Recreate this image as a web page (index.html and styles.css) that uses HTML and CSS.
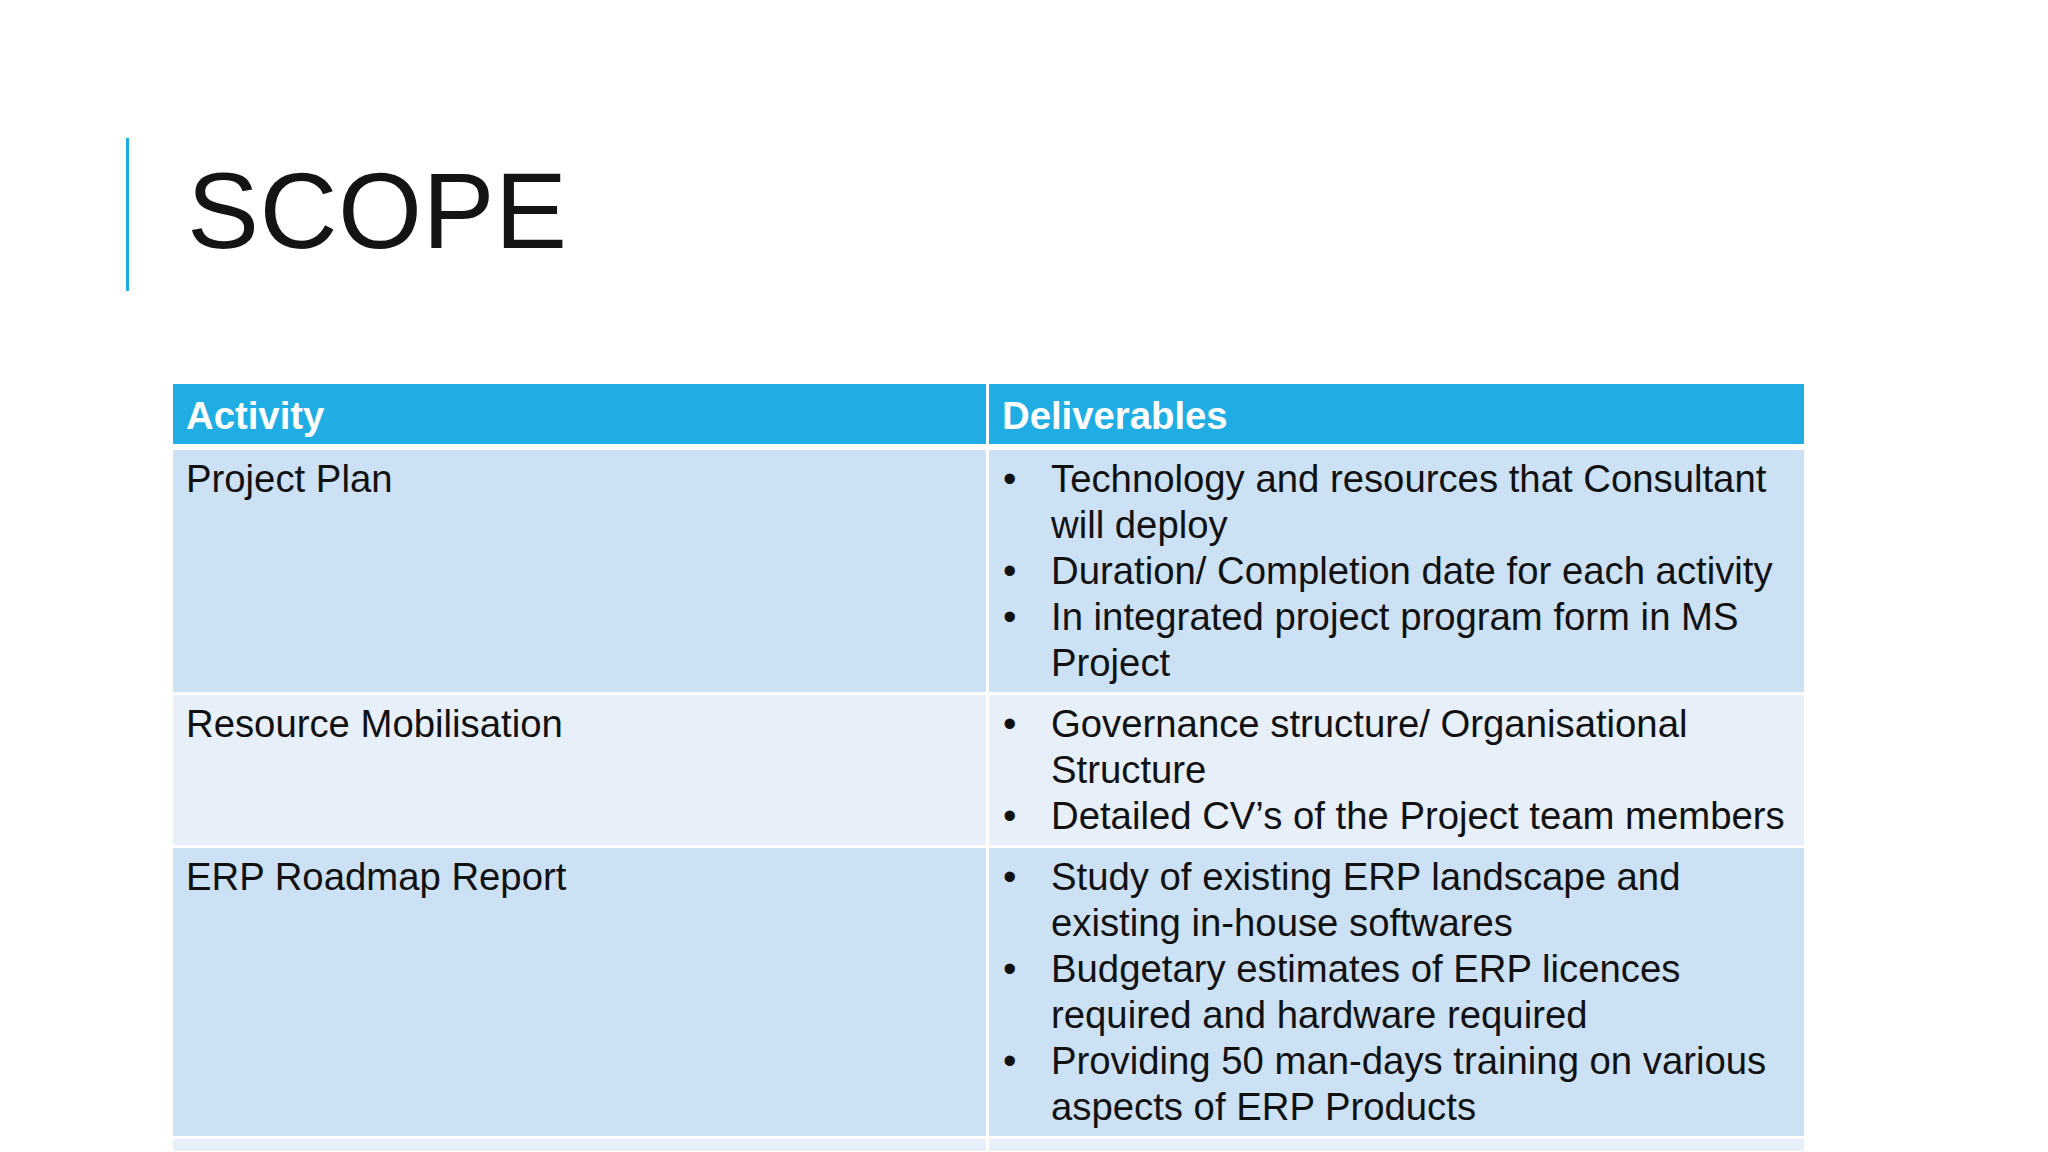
FILE: index.html
```html
<!DOCTYPE html>
<html lang="en">
<head>
<meta charset="utf-8">
<title>Scope</title>
<link rel="stylesheet" href="styles.css">
</head>
<body>
<div class="slide">
  <header class="title-block">
    <div class="accent"></div>
    <h1 class="title">SCOPE</h1>
  </header>
  <div class="table">
    <div class="cell head">Activity</div>
    <div class="cell head">Deliverables</div>

    <div class="cell odd">Project Plan</div>
    <div class="cell odd">
      <ul class="bullets">
        <li>Technology and resources that Consultant will deploy</li>
        <li>Duration/ Completion date for each activity</li>
        <li>In integrated project program form in MS Project</li>
      </ul>
    </div>

    <div class="cell even">Resource Mobilisation</div>
    <div class="cell even">
      <ul class="bullets">
        <li>Governance structure/ Organisational Structure</li>
        <li>Detailed CV’s of the Project team members</li>
      </ul>
    </div>

    <div class="cell odd">ERP Roadmap Report</div>
    <div class="cell odd">
      <ul class="bullets">
        <li>Study of existing ERP landscape and existing in-house softwares</li>
        <li>Budgetary estimates of ERP licences required and hardware required</li>
        <li>Providing 50 man-days training on various aspects of ERP Products</li>
      </ul>
    </div>

    <div class="cell even filler"></div>
    <div class="cell even filler"></div>
  </div>
</div>
</body>
</html>
```

FILE: styles.css
```css
html, body {
  margin: 0;
  padding: 0;
  background: #ffffff;
}
body {
  width: 2048px;
  height: 1152px;
  overflow: hidden;
  font-family: "Liberation Sans", Arial, sans-serif;
  color: #111111;
}
.slide {
  width: 2048px;
  height: 1152px;
  display: flex;
  flex-direction: column;
}
.title-block {
  display: flex;
  align-items: center;
  margin-top: 138px;
  margin-left: 126px;
  height: 153px;
}
.accent {
  width: 3px;
  height: 153px;
  background: #1fade3;
}
.title {
  margin: 0 0 0 58px;
  font-size: 108px;
  font-weight: normal;
  line-height: 1;
  color: #141414;
  position: relative;
  top: -4px;
  letter-spacing: 0.5px;
}
.table {
  margin-top: 93px;
  margin-left: 173px;
  width: 1631px;
  display: grid;
  grid-template-columns: 813px 815px;
  column-gap: 3px;
  row-gap: 3px;
}
.cell {
  font-size: 38.3px;
  line-height: 46px;
  padding: 6px 12px 6px 13px;
}
.head {
  background: #1fade3;
  color: #ffffff;
  font-weight: bold;
  padding-top: 9px;
  padding-bottom: 5px;
  margin-bottom: 3px;
}
.odd {
  background: #cde1f4;
}
.even {
  background: #e7eff9;
}
.filler {
  padding: 0;
  height: 12px;
}
.bullets {
  list-style: none;
  margin: 0;
  padding: 0;
}
.bullets li {
  position: relative;
  padding-left: 49px;
}
.bullets li::before {
  content: "•";
  position: absolute;
  left: 1px;
  top: 0;
}
```
